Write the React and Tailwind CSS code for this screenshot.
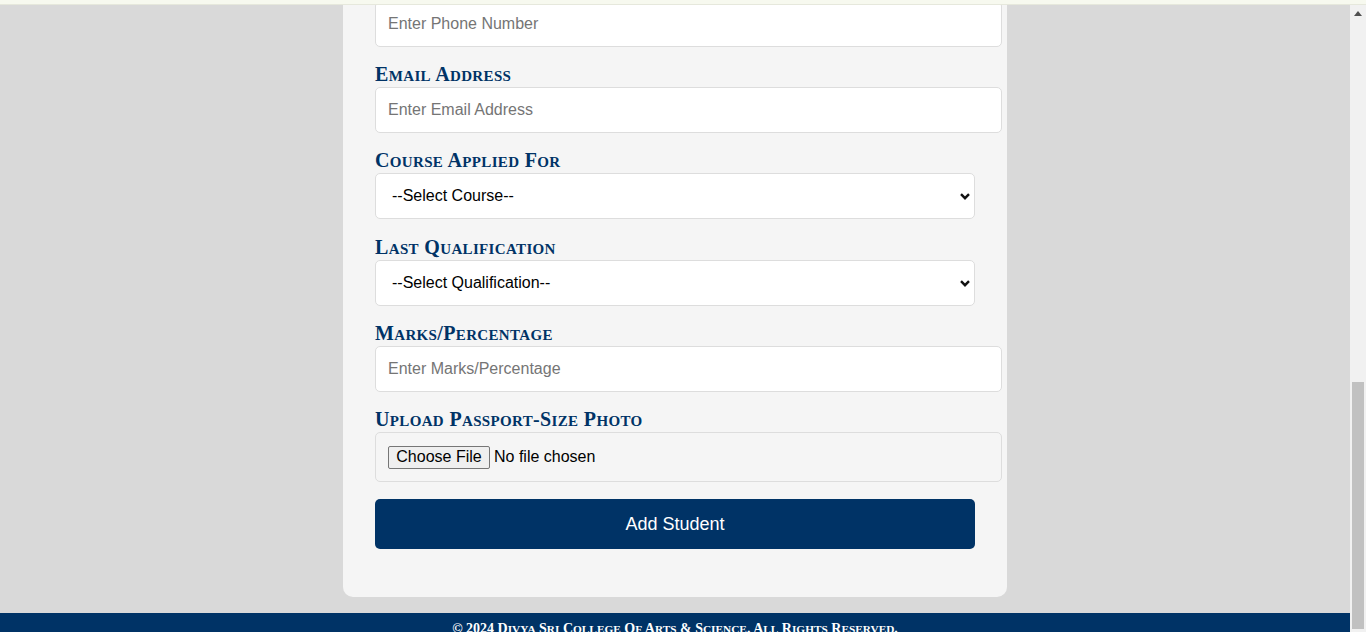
import React from "react";

function SmallCaps({ text, big, small }) {
  const parts = [];
  let cur = "";
  let curLower = null;
  for (const ch of text) {
    const lower = ch !== ch.toUpperCase();
    if (curLower === null || lower === curLower) {
      cur += ch;
    } else {
      parts.push([cur, curLower]);
      cur = ch;
    }
    curLower = lower;
  }
  if (cur) parts.push([cur, curLower]);
  return (
    <>
      {parts.map(([t, lower], i) =>
        lower ? (
          <span key={i} className={small}>
            {t.toUpperCase()}
          </span>
        ) : (
          <span key={i} className={big}>
            {t}
          </span>
        )
      )}
    </>
  );
}

const labelCls =
  "mb-[2px] block h-[22px] whitespace-nowrap text-[20px] leading-[22px] font-bold text-[#003366] [font-family:'Liberation_Serif',serif] tracking-[0.35px]";
const inputCls =
  "box-border h-[46px] w-[627px] rounded-[5px] border border-[#dddddd] bg-white px-3 text-[16px] text-black placeholder:text-[#757575] outline-none [font-family:'Liberation_Sans',Arial,sans-serif]";

function Label({ text }) {
  return (
    <label className={labelCls}>
      <SmallCaps text={text} big="text-[20px]" small="text-[15px]" />
    </label>
  );
}

function Field({ label, placeholder }) {
  return (
    <div className="mt-[16px] flex flex-col">
      <Label text={label} />
      <input className={inputCls} placeholder={placeholder} readOnly />
    </div>
  );
}

function SelectField({ label, text, top }) {
  return (
    <div className={top + " flex flex-col"}>
      <Label text={label} />
      <div className="relative h-[46px] w-[600px]">
        <select className="box-border h-[46px] w-[600px] appearance-none rounded-[5px] border border-[#dddddd] bg-white pl-[16px] text-[16px] text-black outline-none [font-family:'Liberation_Sans',Arial,sans-serif]">
          <option>{text}</option>
        </select>
        <svg
          className="pointer-events-none absolute right-[5px] top-[20px]"
          width="10"
          height="7"
          viewBox="0 0 10 7"
        >
          <path d="M1 1.2 L5 5.2 L9 1.2" fill="none" stroke="#111" strokeWidth="2.4" />
        </svg>
      </div>
    </div>
  );
}

export default function App() {
  return (
    <div className="relative flex h-[632px] w-full overflow-hidden bg-[#d9d9d9] [font-family:'Liberation_Sans',Arial,sans-serif]">
      <div className="absolute left-0 right-0 top-0 z-10 h-[5px] border-b border-[#e6e8dc] bg-[#f7f9ef]" />
      <div className="flex flex-1 flex-col">
        <div className="flex justify-center">
          <div className="box-border w-[664px] rounded-b-[10px] bg-[#f5f5f5] px-8 pb-[48px] pt-[1px]">
            <input className={inputCls} placeholder="Enter Phone Number" readOnly />
            <Field label="Email Address" placeholder="Enter Email Address" />
            <SelectField label="Course Applied For" text="--Select Course--" top="mt-[16px]" />
            <SelectField label="Last Qualification" text="--Select Qualification--" top="mt-[17px]" />
            <Field label="Marks/Percentage" placeholder="Enter Marks/Percentage" />
            <div className="mt-[16px] flex flex-col">
              <Label text="Upload Passport-Size Photo" />
              <div className="box-border flex h-[50px] w-[627px] items-center rounded-[5px] border border-[#dddddd] bg-[#f5f5f5] px-3 text-[16px] text-black">
                <span className="box-border flex h-[23px] w-[102px] items-center justify-center rounded-[2px] border border-[#767676] bg-[#efefef]">
                  Choose File
                </span>
                <span className="ml-[4px]">No file chosen</span>
              </div>
            </div>
            <button className="mt-[17px] box-border flex h-[50px] w-[600px] items-center justify-center rounded-[5px] bg-[#003366] text-[18px] text-white">
              Add Student
            </button>
          </div>
        </div>
        <div className="mt-4 flex flex-1 justify-center bg-[#003366] pt-[7px]">
          <span className="whitespace-nowrap text-[14px] font-bold leading-[18px] text-white [font-family:'Liberation_Serif',serif]">
            <SmallCaps
              text="© 2024 Divya Sri College Of Arts & Science. All Rights Reserved."
              big="text-[14px]"
              small="text-[11.3px]"
            />
          </span>
        </div>
      </div>
      <div className="relative flex w-[16px] flex-col bg-[#f1f1f1]">
        <svg className="absolute left-[4px] top-[11px]" width="8" height="5" viewBox="0 0 8 5">
          <path d="M0 5 L4 0 L8 5 Z" fill="#505050" />
        </svg>
        <div className="ml-[2px] mt-[382px] h-[247px] w-[12px] bg-[#c1c1c1]" />
      </div>
    </div>
  );
}
